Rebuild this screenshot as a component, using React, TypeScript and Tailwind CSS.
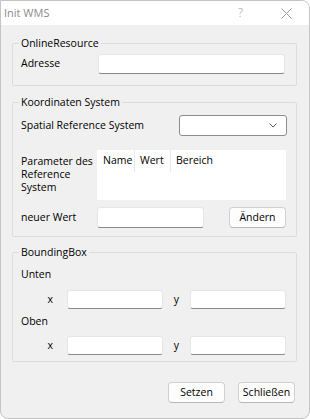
import React from 'react';

const font = { fontFamily: '"Open Sans", sans-serif' };

const LineEdit: React.FC<{ className?: string }> = ({ className = '' }) => (
  <div
    className={`bg-white border border-[#e6e6e6] border-b-[#8a8a8a] rounded-[3px] ${className}`}
  />
);

const PushButton: React.FC<{ label: string; className?: string }> = ({ label, className = '' }) => (
  <button
    className={`bg-[#fdfdfd] border border-[#d0d0d0] border-b-[#b8b8b8] rounded-[4px] text-[10.5px] leading-none text-black flex items-center justify-center ${className}`}
  >
    {label}
  </button>
);

const GroupBox: React.FC<{ title: string; className?: string; children: React.ReactNode }> = ({
  title,
  className = '',
  children
}) => (
  <fieldset className={`w-[285px] ml-[11px] border border-[#dcdcdc] rounded-[2px] pl-[6px] ${className}`}>
    <legend className="px-[2px] text-[10.5px] leading-[16px] text-black">{title}</legend>
    <div className="ml-[2px]">{children}</div>
  </fieldset>
);

const CoordRow: React.FC<{ className?: string }> = ({ className = '' }) => (
  <div className={`flex items-center h-[19px] ${className}`}>
    <span className="w-[46px] pr-[14px] text-right text-[10.5px]">x</span>
    <LineEdit className="w-[96px] h-[19px]" />
    <span className="w-[27px] text-center text-[10.5px]">y</span>
    <LineEdit className="w-[96px] h-[19px]" />
  </div>
);

export default function App() {
  return (
    <div
      className="w-[310px] h-[419px] bg-[#f0f0f0] border border-[#c4c4c4] rounded-tr-[8px] rounded-b-[8px] overflow-hidden text-black"
      style={font}
    >
      {/* title bar */}
      <div className="h-[24px] bg-white flex items-center justify-between pl-[3px]">
        <span className="text-[11px] text-[#8c8c8c]">Init WMS</span>
        <div className="flex items-center gap-[38px] pr-[17px]">
          <span className="text-[12px] text-[#9a9a9a] font-light">?</span>
          <svg width="11" height="11" viewBox="0 0 11 11" className="mt-[1px]">
            <path d="M0.5 0.5 L10.5 10.5 M10.5 0.5 L0.5 10.5" stroke="#9a9a9a" strokeWidth="1" />
          </svg>
        </div>
      </div>

      <GroupBox title="OnlineResource" className="mt-[10px] h-[51px]">
        <div className="flex items-center pt-[3px]">
          <span className="w-[77px] text-[10.5px]">Adresse</span>
          <LineEdit className="w-[187px] h-[20px]" />
        </div>
      </GroupBox>

      <GroupBox title="Koordinaten System" className="mt-[8px] h-[143px]">
        <div className="flex items-center justify-between pt-[5px] pr-[9px]">
          <span className="text-[10.5px]">Spatial Reference System</span>
          <div className="w-[108px] h-[21px] bg-white border border-[#8d8d8d] rounded-[3px] flex items-center justify-end pr-[9px]">
            <svg width="8" height="5" viewBox="0 0 8 5">
              <path d="M0.5 0.5 L4 4 L7.5 0.5" fill="none" stroke="#606060" strokeWidth="1" />
            </svg>
          </div>
        </div>
        <div className="flex mt-[14px]">
          <div className="w-[76px] pt-[5px] text-[10.5px] leading-[13px] whitespace-nowrap">
            Parameter des
            <br />
            Reference
            <br />
            System
          </div>
          <div className="w-[189px] h-[50px] bg-white">
            <div className="flex h-[22px] text-[10.5px] items-center">
              <span className="w-[38px] h-full pl-[6px] flex items-center border-r border-[#e8e8e8]">Name</span>
              <span className="w-[36px] h-full pl-[5px] flex items-center border-r border-[#e8e8e8]">Wert</span>
              <span className="pl-[5px]">Bereich</span>
            </div>
          </div>
        </div>
        <div className="flex items-center mt-[7px]">
          <span className="w-[76px] text-[10.5px]">neuer Wert</span>
          <LineEdit className="w-[107px] h-[21px]" />
          <PushButton label="Ändern" className="ml-[25px] w-[57px] h-[21px]" />
        </div>
      </GroupBox>

      <GroupBox title="BoundingBox" className="mt-[7px] h-[118px]">
        <div className="mt-[6px] text-[10.5px] leading-[16px]">Unten</div>
        <CoordRow className="mt-[8px]" />
        <div className="mt-[4px] text-[10.5px] leading-[16px]">Oben</div>
        <CoordRow className="mt-[7px]" />
      </GroupBox>

      <div className="flex justify-end gap-[13px] pr-[14px] mt-[20px]">
        <PushButton label="Setzen" className="w-[57px] h-[21px]" />
        <PushButton label="Schließen" className="w-[57px] h-[21px]" />
      </div>
    </div>
  );
}
